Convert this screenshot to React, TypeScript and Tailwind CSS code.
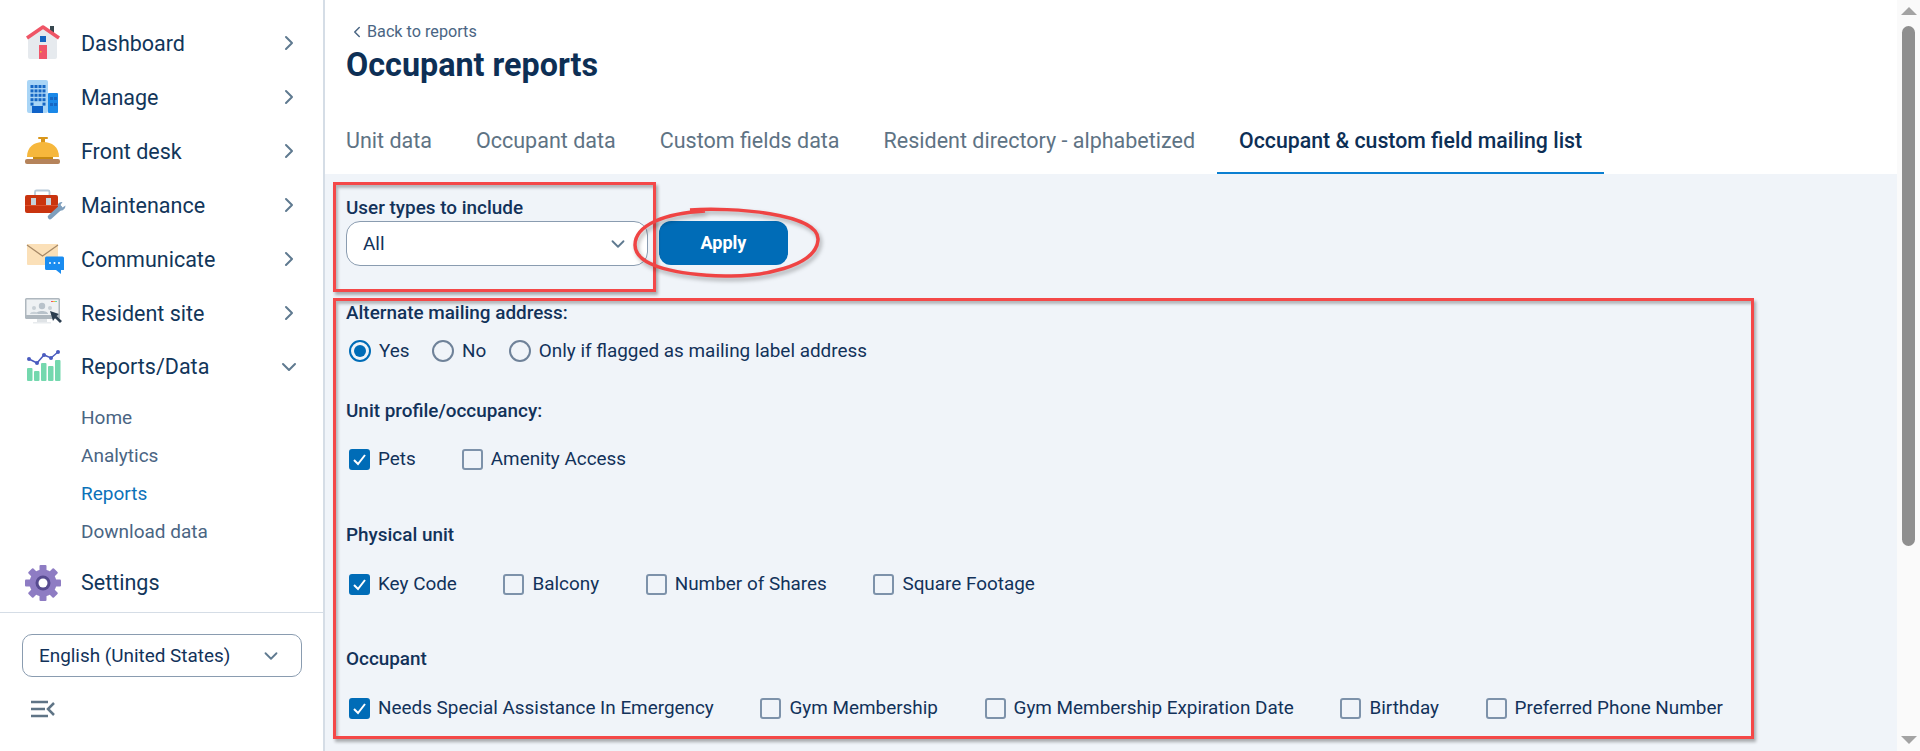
import { ChevronDown, ChevronLeft, ChevronRight } from 'lucide-react';
import type { ReactNode } from 'react';

const HouseIcon = () => (
    <svg width="44" height="44" viewBox="0 0 44 44">
        <rect x="26" y="5" width="4" height="9" fill="#37474f" />
        <path d="M4 16 L19 6 L33 16 V36 a2 2 0 0 1 -2 2 H6 a2 2 0 0 1 -2 -2 Z" fill="#e6eaee" />
        <path d="M3 17 L19 6 L35 17" fill="none" stroke="#ef5566" strokeWidth="3.5" strokeLinejoin="round" />
        <rect x="16" y="15" width="6" height="6" fill="#1565c0" />
        <rect x="15" y="24" width="8" height="14" fill="#f0556a" />
        <rect x="16" y="30" width="1.5" height="1.5" fill="#f6b73c" />
    </svg>
);

const BuildingIcon = () => {
    const cells = [];
    for (let r = 0; r < 5; r++) {
        for (let c = 0; c < 4; c++) {
            if (r === 4 && c > 0 && c < 3) continue;
            cells.push(<rect key={`${r}-${c}`} x={6.5 + c * 4} y={10 + r * 4.4} width="3" height="3" fill="#1667c4" />);
        }
    }
    return (
        <svg width="44" height="44" viewBox="0 0 44 44">
            <rect x="24" y="18" width="10" height="20" rx="1" fill="#1a88e8" />
            <rect x="26" y="22" width="3" height="3" fill="#1667c4" />
            <rect x="30" y="22" width="3" height="3" fill="#1667c4" />
            <rect x="26" y="28" width="3" height="3" fill="#1667c4" />
            <rect x="30" y="28" width="3" height="3" fill="#1667c4" />
            <rect x="3" y="5" width="21" height="33" rx="2" fill="#a9d5f6" />
            {cells}
            <rect x="8" y="31" width="11" height="7" fill="#0f62c8" />
        </svg>
    );
};

const BellIcon = () => (
    <svg width="44" height="44" viewBox="0 0 44 44">
        <rect x="14" y="8" width="10" height="2" rx="1" fill="#d9961a" />
        <rect x="17" y="9" width="4" height="5" fill="#d9961a" />
        <path d="M3 28 C3 18 10 13 19 13 C28 13 35 18 35 28 Z" fill="#f6b73c" />
        <rect x="9" y="28" width="20" height="2" fill="#c98a10" />
        <rect x="1" y="30" width="35" height="5" rx="2" fill="#b5835a" />
    </svg>
);

const ToolboxIcon = () => (
    <svg width="44" height="44" viewBox="0 0 44 44">
        <path d="M11 12 V9 a1.5 1.5 0 0 1 1.5 -1.5 H24 a1.5 1.5 0 0 1 1.5 1.5 V12" fill="none" stroke="#b6c8d8" strokeWidth="1.8" />
        <rect x="1" y="12" width="33" height="18" rx="2" fill="#c9340f" />
        <rect x="1" y="22" width="33" height="1" fill="#e0512b" />
        <rect x="7" y="15" width="5" height="7" fill="#c5d2dc" />
        <rect x="22" y="15" width="5" height="7" fill="#c5d2dc" />
        <path d="M26 34 L36 25" stroke="#7f9fbd" strokeWidth="4.5" strokeLinecap="round" />
        <path d="M35 26 L33.5 22 a5 5 0 0 1 5 -3 l-2 3 l2 2.5 l3 -2 a5 5 0 0 1 -6 5 Z" fill="#7f9fbd" />
    </svg>
);

const MailIcon = () => (
    <svg width="44" height="44" viewBox="0 0 44 44">
        <rect x="3" y="7" width="31" height="21" rx="1" fill="#fbe0b8" />
        <path d="M3 8 L18.5 19 L34 8" fill="none" stroke="#a88a68" strokeWidth="1.3" />
        <path d="M21 21 a1.5 1.5 0 0 1 1.5 -1.5 H38.5 a1.5 1.5 0 0 1 1.5 1.5 V33 H37 V37 L32 33 H22.5 a1.5 1.5 0 0 1 -1.5 -1.5 Z" fill="#1a8cf0" />
        <circle cx="26" cy="26" r="1" fill="#fff" />
        <circle cx="30.5" cy="26" r="1" fill="#fff" />
        <circle cx="35" cy="26" r="1" fill="#fff" />
    </svg>
);

const MonitorIcon = () => (
    <svg width="44" height="44" viewBox="0 0 44 44">
        <rect x="13" y="28" width="10" height="4" fill="#dfe3e6" />
        <rect x="9" y="31" width="18" height="1.5" fill="#e8ebee" />
        <rect x="1" y="7" width="35" height="21" rx="1.5" fill="#aeb7be" />
        <rect x="2.5" y="8.5" width="32" height="15.5" fill="#eef1f3" />
        <circle cx="18" cy="15" r="3.2" fill="#b8c2ca" />
        <path d="M12 23 C12 19 24 19 24 23 Z" fill="#b8c2ca" />
        <circle cx="10" cy="17" r="2" fill="#c8d0d6" />
        <path d="M6 23 C6 20 14 20 14 23 Z" fill="#c8d0d6" />
        <circle cx="26" cy="17" r="2" fill="#c8d0d6" />
        <rect x="27" y="10" width="2" height="1" fill="#ef5566" />
        <rect x="29" y="10" width="2" height="1" fill="#f6b73c" />
        <rect x="31" y="10" width="2" height="1" fill="#6fd6aa" />
        <path d="M26 20 L35 23 L32.5 25 L38 30 L36 32 L31 27 L29 30 Z" fill="#2c3e50" />
    </svg>
);

const ChartIcon = () => (
    <svg width="44" height="44" viewBox="0 0 44 44">
        <rect x="3" y="23" width="5.5" height="13" rx="1" fill="#74d8ae" />
        <rect x="10" y="26" width="5.5" height="10" rx="1" fill="#74d8ae" />
        <rect x="17" y="18" width="5.5" height="18" rx="1" fill="#74d8ae" />
        <rect x="24" y="21" width="5.5" height="15" rx="1" fill="#74d8ae" />
        <rect x="31" y="15" width="5.5" height="21" rx="1" fill="#74d8ae" />
        <path d="M5 14 L13 18 L20 10 L27 13 L34 7" fill="none" stroke="#4a5bbf" strokeWidth="1.5" />
        <circle cx="5" cy="14" r="2" fill="#4a5bbf" />
        <circle cx="13" cy="18" r="2" fill="#4a5bbf" />
        <circle cx="20" cy="10" r="2" fill="#4a5bbf" />
        <circle cx="27" cy="13" r="2" fill="#4a5bbf" />
        <circle cx="34" cy="7" r="2" fill="#4a5bbf" />
    </svg>
);

const GearIcon = () => (
    <svg width="44" height="44" viewBox="0 0 44 44">
        {[0, 45, 90, 135, 180, 225, 270, 315].map((a) => (
            <rect key={a} x="15.5" y="4" width="7" height="8" rx="1" fill="#8e7cc3" transform={`rotate(${a} 19 22)`} />
        ))}
        <circle cx="19" cy="22" r="13.5" fill="#8e7cc3" />
        <circle cx="19" cy="22" r="7.5" fill="#574b90" />
        <circle cx="19" cy="22" r="4.5" fill="#fff" />
    </svg>
);

const navItems: { label: string; icon: ReactNode; open?: boolean }[] = [
    { label: 'Dashboard', icon: <HouseIcon /> },
    { label: 'Manage', icon: <BuildingIcon /> },
    { label: 'Front desk', icon: <BellIcon /> },
    { label: 'Maintenance', icon: <ToolboxIcon /> },
    { label: 'Communicate', icon: <MailIcon /> },
    { label: 'Resident site', icon: <MonitorIcon /> },
    { label: 'Reports/Data', icon: <ChartIcon />, open: true },
];

function NavRow({ label, icon, open }: { label: string; icon: ReactNode; open?: boolean }) {
    return (
        <div className="flex h-[54px] items-center pl-6">
            <div className="h-11 w-11 shrink-0">{icon}</div>
            <span className={`ml-[13px] flex-1 text-[21.5px] text-[#12365a] ${open ? 'pt-0' : 'pt-[2px]'}`}>{label}</span>
            {open ? (
                <ChevronDown size={24} strokeWidth={2} className="mr-[22px] text-[#5f7a90]" />
            ) : (
                <ChevronRight size={24} strokeWidth={2} className="mr-[22px] text-[#5f7a90]" />
            )}
        </div>
    );
}

function Sidebar() {
    return (
        <aside className="flex h-full w-[325px] shrink-0 flex-col border-r-2 border-[#d5dde6] bg-white">
            <div className="pt-4">
                {navItems.map((item) => (
                    <NavRow key={item.label} {...item} />
                ))}
                <div className="pl-[81px] pt-[5px] text-[19px] text-[#4a6583]">
                    <div className="flex h-[38px] items-center">Home</div>
                    <div className="flex h-[38px] items-center">Analytics</div>
                    <div className="flex h-[38px] items-center text-[#0b72b9]">Reports</div>
                    <div className="flex h-[38px] items-center">Download data</div>
                </div>
                <div className="mt-[4px] flex h-[54px] items-center pl-6 pt-[2px]">
                    <div className="h-11 w-11 shrink-0">
                        <GearIcon />
                    </div>
                    <span className="ml-[13px] text-[21.5px] text-[#12365a]">Settings</span>
                </div>
            </div>
            <div className="mt-[3px] border-t border-[#d5dde6] px-[22px] pt-[21px]">
                <div className="flex h-[43px] w-[280px] items-center justify-between rounded-[10px] border border-[#8a9cb0] pl-4 pr-[19px] pt-[1px] text-[18.9px] text-[#12325a]">
                    English (United States)
                    <ChevronDown size={22} strokeWidth={2} className="text-[#5f7a90]" />
                </div>
                <svg width="26" height="18" viewBox="0 0 26 18" className="ml-[8px] mt-[23px]">
                    <path d="M1 2 H18 M1 9 H15 M1 16 H18" stroke="#5f7486" strokeWidth="2.5" />
                    <path d="M24 3 L18 9 L24 15" fill="none" stroke="#5f7486" strokeWidth="2.5" />
                </svg>
            </div>
        </aside>
    );
}

const tabs = ['Unit data', 'Occupant data', 'Custom fields data', 'Resident directory - alphabetized'];

function Radio({ label, checked }: { label: string; checked?: boolean }) {
    return (
        <label className="flex items-center gap-2">
            <span
                className={`flex h-[22px] w-[22px] items-center justify-center rounded-full border-2 ${
                    checked ? 'border-[#006cb7]' : 'border-[#6f8299]'
                }`}
            >
                {checked && <span className="h-3 w-3 rounded-full bg-[#006cb7]" />}
            </span>
            {label}
        </label>
    );
}

function Check({ label, checked }: { label: string; checked?: boolean }) {
    return (
        <label className="flex items-center gap-2">
            <span
                className={`flex h-[21px] w-[21px] items-center justify-center rounded-[3px] border-2 ${
                    checked ? 'border-[#006cb7] bg-[#006cb7]' : 'border-[#7d92aa]'
                }`}
            >
                {checked && (
                    <svg width="15" height="15" viewBox="0 0 15 15">
                        <path d="M2 8 L6 12 L13 3" fill="none" stroke="#fff" strokeWidth="2" />
                    </svg>
                )}
            </span>
            {label}
        </label>
    );
}

function Content() {
    return (
        <div className="relative min-w-0 flex-1 bg-[#f0f4f9]">
            <div className="pl-[21px] pt-[22px] text-[18.9px] leading-6 text-[#12325a]">
                <div className="font-medium">User types to include</div>
                <div className="mt-[1px] flex items-start">
                    <div className="flex h-[45px] w-[302px] items-center justify-between rounded-[14px] border border-[#8a9cb0] bg-white pl-[16px] pr-[18px] pt-[1px]">
                        All
                        <ChevronDown size={22} strokeWidth={2} className="text-[#5f7a90]" />
                    </div>
                    <button className="ml-[11px] h-[44px] w-[129px] rounded-[12px] bg-[#006cb7] text-[18px] font-bold text-white">
                        Apply
                    </button>
                </div>

                <div className="mt-[35px] font-medium">Alternate mailing address:</div>
                <div className="mt-[14px] flex gap-[22.5px] pl-[3px]">
                    <Radio label="Yes" checked />
                    <Radio label="No" />
                    <Radio label="Only if flagged as mailing label address" />
                </div>

                <div className="mt-[36px] font-medium">Unit profile/occupancy:</div>
                <div className="mt-[24px] flex gap-[46px] pl-[3px]">
                    <Check label="Pets" checked />
                    <Check label="Amenity Access" />
                </div>

                <div className="mt-[52px] font-medium">Physical unit</div>
                <div className="mt-[25px] flex gap-[46.6px] pl-[3px]">
                    <Check label="Key Code" checked />
                    <Check label="Balcony" />
                    <Check label="Number of Shares" />
                    <Check label="Square Footage" />
                </div>

                <div className="mt-[51px] font-medium">Occupant</div>
                <div className="mt-[25px] flex gap-[46.6px] pl-[3px]">
                    <Check label="Needs Special Assistance In Emergency" checked />
                    <Check label="Gym Membership" />
                    <Check label="Gym Membership Expiration Date" />
                    <Check label="Birthday" />
                    <Check label="Preferred Phone Number" />
                </div>
            </div>

            {/* annotations drawn on top of the screenshot */}
            <div className="absolute left-[8px] top-[8px] h-[110px] w-[323px] border-[3px] border-[#f44848] shadow-[2px_3px_3px_rgba(0,0,0,0.3),inset_2px_3px_3px_rgba(0,0,0,0.25)]" />
            <div className="absolute left-[8px] top-[124px] h-[441px] w-[1421px] border-[3px] border-[#f44848] shadow-[2px_3px_3px_rgba(0,0,0,0.3),inset_2px_3px_3px_rgba(0,0,0,0.25)]" />
            <svg width="195" height="75" viewBox="0 0 195 75" className="absolute left-[305px] top-[31px] overflow-visible drop-shadow-[2px_3px_2px_rgba(0,0,0,0.3)]">
                <path
                    d="M60 5 C100 2 190 8 188 35 C186 62 130 72 95 71 C50 70 5 62 5 40 C5 20 35 8 75 6"
                    fill="none"
                    stroke="#ef4444"
                    strokeWidth="3.5"
                />
            </svg>
        </div>
    );
}

function Scrollbar() {
    return (
        <div className="flex h-full w-[23px] shrink-0 flex-col items-center bg-[#fafafa] pt-[7px]">
            <div className="h-0 w-0 border-x-[8px] border-b-[8px] border-x-transparent border-b-[#a3a3a3]" />
            <div className="mt-[11px] h-[520px] w-[13px] rounded-full bg-[#8f8f8f]" />
            <div className="mt-auto mb-[7px] h-0 w-0 border-x-[8px] border-t-[8px] border-x-transparent border-t-[#a3a3a3]" />
        </div>
    );
}

export default function App() {
    return (
        <div className="flex h-screen w-full overflow-hidden bg-white font-['Roboto',sans-serif]">
            <Sidebar />
            <main className="flex min-w-0 flex-1 flex-col">
                <div className="pl-[21px] pt-[21px]">
                    <div className="flex h-[22px] items-center text-[16.2px] text-[#4a6583]">
                        <ChevronLeft size={18} strokeWidth={2} className="ml-[2px] mr-[1px]" />
                        Back to reports
                    </div>
                    <h1 className="mt-[2px] text-[32.3px] font-bold leading-10 text-[#0d2f55]">Occupant reports</h1>
                    <div className="mt-[25px] flex h-[64px] text-[21.5px] leading-[26px] text-[#5e7384]">
                        {tabs.map((t, i) => (
                            <div key={t} className={`pt-[18px] ${i === 0 ? 'pr-[22px]' : 'px-[22px]'}`}>
                                {t}
                            </div>
                        ))}
                        <div className="border-b-2 border-[#0b7fd1] px-[22px] pt-[18px] text-[21.3px] font-medium text-[#0d2f55]">
                            Occupant &amp; custom field mailing list
                        </div>
                    </div>
                </div>
                <Content />
            </main>
            <Scrollbar />
        </div>
    );
}
